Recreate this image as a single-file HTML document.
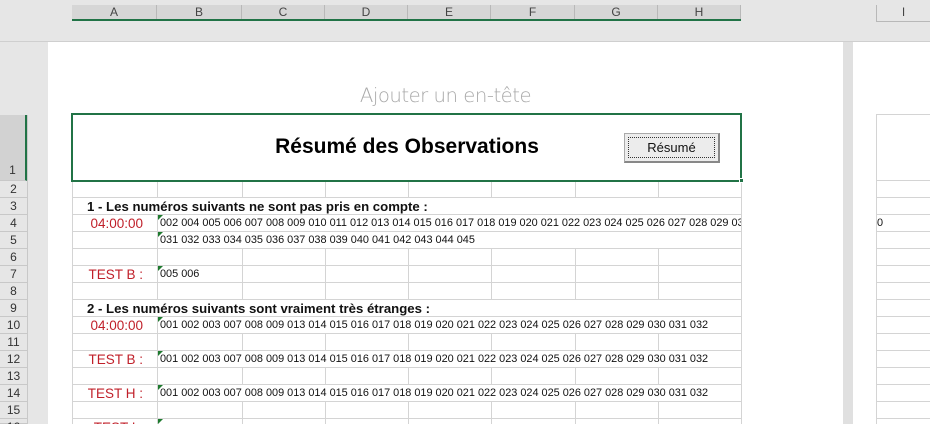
<!DOCTYPE html>
<html style="width:930px;height:424px;overflow:hidden"><head><meta charset="utf-8"><style>
*{margin:0;padding:0;box-sizing:border-box}
body{width:930px;height:424px;overflow:hidden;background:#e6e6e6;position:relative;font-family:"Liberation Sans",Arial,sans-serif}
.a{position:absolute}
.ch{position:absolute;top:5px;height:15px;background:#d6d6d6;border-right:1px solid #b8b8b8;font-size:12px;color:#444;text-align:center;line-height:15px}
.rh{position:absolute;left:0;width:27px;height:17px;font-size:12px;color:#333;text-align:center;line-height:17px;border-bottom:1px solid #c8c8c8;background:#e6e6e6}
.hl{position:absolute;height:1px;background:#d4d4d4}
.vl{position:absolute;width:1px;background:#d4d4d4}
.t{position:absolute;white-space:nowrap;background:#fff;height:16px;line-height:17px;overflow:hidden}
.num{font-size:10.9px;color:#111;left:158px;padding-left:2px;width:583px}
.lab{font-size:13.5px;color:#c0202a;left:73px;width:70px;text-align:right;overflow:visible}
.tri{position:absolute;left:158px;width:0;height:0;border-top:5px solid #1e7a2e;border-right:5px solid transparent}
.b{font-weight:bold;font-size:13.2px;color:#111;left:73px;padding-left:14px;width:668px}
</style></head><body>
<div class="ch" style="left:72px;width:85px">A</div>
<div class="ch" style="left:157px;width:85px">B</div>
<div class="ch" style="left:242px;width:83px">C</div>
<div class="ch" style="left:325px;width:83px">D</div>
<div class="ch" style="left:408px;width:83px">E</div>
<div class="ch" style="left:491px;width:84px">F</div>
<div class="ch" style="left:575px;width:83px">G</div>
<div class="ch" style="left:658px;width:83px">H</div>
<div class="a" style="left:72px;top:19px;width:669px;height:2px;background:#217346"></div>
<div class="a" style="left:876px;top:5px;width:54px;height:17px;border-left:1px solid #b8b8b8;border-bottom:1px solid #b8b8b8;font-size:12px;color:#444;text-align:center;line-height:15px">I</div>
<div class="a" style="left:0;top:41px;width:930px;height:1px;background:#cfcfcf"></div>
<div class="a" style="left:48px;top:42px;width:795px;height:382px;background:#fff"></div>
<div class="a" style="left:853px;top:42px;width:77px;height:382px;background:#fff"></div>
<div class="a" style="left:843px;top:42px;width:10px;height:382px;background:#e0e0e0"></div>
<div class="a" style="left:48px;top:82px;width:795px;text-align:center;font-size:19.7px;color:#a8a8a8;font-family:'DejaVu Sans','Liberation Sans',sans-serif;font-weight:300;line-height:28px;letter-spacing:-0.5px">Ajouter un en-tête</div>
<div class="rh" style="top:115px;height:66px;background:#d2d2d2;line-height:110px;border-right:2px solid #217346">1</div>
<div class="rh" style="top:181px">2</div><div class="rh" style="top:198px">3</div><div class="rh" style="top:215px">4</div><div class="rh" style="top:232px">5</div><div class="rh" style="top:249px">6</div><div class="rh" style="top:266px">7</div><div class="rh" style="top:283px">8</div><div class="rh" style="top:300px">9</div><div class="rh" style="top:317px">10</div><div class="rh" style="top:334px">11</div><div class="rh" style="top:351px">12</div><div class="rh" style="top:368px">13</div><div class="rh" style="top:385px">14</div><div class="rh" style="top:402px">15</div><div class="rh" style="top:419px;height:5px">16</div>
<div class="a" style="left:27px;top:115px;width:1px;height:309px;background:#c8c8c8"></div>
<div class="hl" style="left:72px;width:669px;top:197px"></div><div class="hl" style="left:72px;width:669px;top:214px"></div><div class="hl" style="left:72px;width:669px;top:231px"></div><div class="hl" style="left:72px;width:669px;top:248px"></div><div class="hl" style="left:72px;width:669px;top:265px"></div><div class="hl" style="left:72px;width:669px;top:282px"></div><div class="hl" style="left:72px;width:669px;top:299px"></div><div class="hl" style="left:72px;width:669px;top:316px"></div><div class="hl" style="left:72px;width:669px;top:333px"></div><div class="hl" style="left:72px;width:669px;top:350px"></div><div class="hl" style="left:72px;width:669px;top:367px"></div><div class="hl" style="left:72px;width:669px;top:384px"></div><div class="hl" style="left:72px;width:669px;top:401px"></div><div class="hl" style="left:72px;width:669px;top:418px"></div>
<div class="vl" style="left:72px;top:181px;height:243px"></div><div class="vl" style="left:157px;top:181px;height:243px"></div><div class="vl" style="left:242px;top:181px;height:243px"></div><div class="vl" style="left:325px;top:181px;height:243px"></div><div class="vl" style="left:408px;top:181px;height:243px"></div><div class="vl" style="left:491px;top:181px;height:243px"></div><div class="vl" style="left:575px;top:181px;height:243px"></div><div class="vl" style="left:658px;top:181px;height:243px"></div><div class="vl" style="left:741px;top:181px;height:243px"></div>
<div class="vl" style="left:876px;top:114px;height:310px"></div>
<div class="hl" style="left:876px;width:54px;top:114px"></div><div class="hl" style="left:876px;width:54px;top:180px"></div><div class="hl" style="left:876px;width:54px;top:197px"></div><div class="hl" style="left:876px;width:54px;top:214px"></div><div class="hl" style="left:876px;width:54px;top:231px"></div><div class="hl" style="left:876px;width:54px;top:248px"></div><div class="hl" style="left:876px;width:54px;top:265px"></div><div class="hl" style="left:876px;width:54px;top:282px"></div><div class="hl" style="left:876px;width:54px;top:299px"></div><div class="hl" style="left:876px;width:54px;top:316px"></div><div class="hl" style="left:876px;width:54px;top:333px"></div><div class="hl" style="left:876px;width:54px;top:350px"></div><div class="hl" style="left:876px;width:54px;top:367px"></div><div class="hl" style="left:876px;width:54px;top:384px"></div><div class="hl" style="left:876px;width:54px;top:401px"></div><div class="hl" style="left:876px;width:54px;top:418px"></div>
<div class="a" style="left:877px;top:215px;font-size:10.9px;line-height:17px;color:#111">0</div>
<div class="a" style="left:71px;top:113px;width:671px;height:69px;border:2px solid #217346;background:#fff"></div>
<div class="a" style="left:739px;top:178px;width:5px;height:5px;background:#217346;border:1px solid #fff"></div>
<div class="a" style="left:274px;top:134px;width:266px;text-align:center;font-size:21px;font-weight:bold;color:#000;line-height:26px;white-space:nowrap">Résumé des Observations</div>
<div class="a" style="left:624px;top:133px;width:96px;height:30px;background:#ececec;border:1px solid #aaa;border-right:2px solid #888;border-bottom:2px solid #888"><div style="margin:3px;height:21px;border:1px dotted #333;font-size:13px;text-align:center;line-height:19px;color:#111">Résumé</div></div>
<div class="t b" style="top:198px">1 - Les numéros suivants ne sont pas pris en compte :</div>
<div class="t lab" style="top:215px">04:00:00</div>
<div class="t num" style="top:215px">002 004 005 006 007 008 009 010 011 012 013 014 015 016 017 018 019 020 021 022 023 024 025 026 027 028 029 030</div>
<div class="tri" style="top:215px"></div>
<div class="t num" style="top:232px">031 032 033 034 035 036 037 038 039 040 041 042 043 044 045</div>
<div class="tri" style="top:232px"></div>
<div class="t lab" style="top:266px">TEST B :</div>
<div class="t num" style="top:266px;width:84px">005 006</div>
<div class="tri" style="top:266px"></div>
<div class="t b" style="top:300px">2 - Les numéros suivants sont vraiment très étranges :</div>
<div class="t lab" style="top:317px">04:00:00</div>
<div class="t num" style="top:317px;width:556px">001 002 003 007 008 009 013 014 015 016 017 018 019 020 021 022 023 024 025 026 027 028 029 030 031 032</div>
<div class="tri" style="top:317px"></div>
<div class="t lab" style="top:351px">TEST B :</div>
<div class="t num" style="top:351px;width:556px">001 002 003 007 008 009 013 014 015 016 017 018 019 020 021 022 023 024 025 026 027 028 029 030 031 032</div>
<div class="tri" style="top:351px"></div>
<div class="t lab" style="top:385px">TEST H :</div>
<div class="t num" style="top:385px;width:556px">001 002 003 007 008 009 013 014 015 016 017 018 019 020 021 022 023 024 025 026 027 028 029 030 031 032</div>
<div class="tri" style="top:385px"></div>
<div class="t lab" style="top:419px;height:5px;overflow:hidden">TEST I :</div>
<div class="tri" style="top:419px"></div>
</body></html>
